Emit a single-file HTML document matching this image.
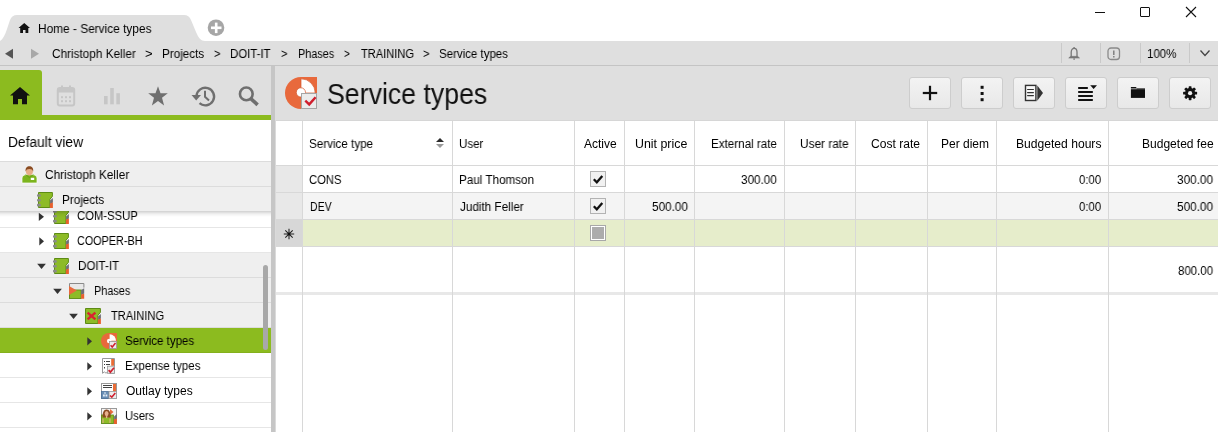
<!DOCTYPE html>
<html><head><meta charset="utf-8"><style>
html,body{margin:0;padding:0;width:1218px;height:432px;overflow:hidden;background:#fff;font-family:"Liberation Sans", sans-serif}
.t{position:absolute;white-space:nowrap;font-family:"Liberation Sans", sans-serif;will-change:transform}
.r{position:absolute}
.s{position:absolute;overflow:visible}
</style></head><body>
<svg class="s" style="left:0px;top:0px" width="260" height="42" viewBox="0 0 260 42"><path d="M0,41 C3,39 5,35 7,29 L10,20 C11.5,16.5 13.5,15 17,15 L184,15 C187.5,15 189.5,16.5 191,20 L196,32 C198.5,38 201,41 205,41 Z" fill="#dfdfdf"/><circle cx="216" cy="27.7" r="8.3" fill="#a6a6a6"/><rect x="211" y="26.5" width="10.5" height="2.6" fill="#fff"/><rect x="214.9" y="22.6" width="2.6" height="10.5" fill="#fff"/></svg>
<svg class="s" style="left:18px;top:22px" width="13" height="12" viewBox="0 0 13 12"><path d="M0.5,6 L6.25,1 L12,6 L10.3,6 L10.3,11 L7.5,11 L7.5,8 L5,8 L5,11 L2.2,11 L2.2,6 Z" fill="#111"/></svg>
<div class="t" style="top:20.84px;font-size:12px;line-height:16px;color:#000;left:37.71px;transform:scaleX(0.9894);transform-origin:0 0;">Home - Service types</div>
<div class="r" style="left:1095px;top:12px;width:10px;height:1px;background:#111;"></div>
<div class="r" style="left:1140px;top:7px;width:10px;height:10px;background:transparent;border:1px solid #111;box-sizing:border-box;border-radius:1px"></div>
<svg class="s" style="left:1185px;top:6px" width="12" height="12" viewBox="0 0 12 12"><path d="M1,1 L11,11 M11,1 L1,11" stroke="#111" stroke-width="1.1"/></svg>
<div class="r" style="left:0px;top:41px;width:1218px;height:24px;background:#dfdfdf;"></div>
<div class="r" style="left:0px;top:65px;width:1218px;height:1px;background:#c4c4c4;"></div>
<svg class="s" style="left:4px;top:48px" width="10" height="12" viewBox="0 0 10 12"><path d="M9,0.8 L9,10.8 L1,5.8 Z" fill="#555"/></svg>
<svg class="s" style="left:30px;top:48px" width="10" height="12" viewBox="0 0 10 12"><path d="M1,0.8 L1,10.8 L9,5.8 Z" fill="#a8a8a8"/></svg>
<div class="t" style="top:45.54px;font-size:12px;line-height:16px;color:#000;left:52.22px;transform:scaleX(0.9812);transform-origin:0 0;">Christoph Keller</div>
<div class="t" style="top:45.54px;font-size:12px;line-height:16px;color:#000;left:145.42px;transform:scaleX(1.0833);transform-origin:0 0;">&gt;</div>
<div class="t" style="top:45.54px;font-size:12px;line-height:16px;color:#000;left:162.33px;transform:scaleX(0.9738);transform-origin:0 0;">Projects</div>
<div class="t" style="top:45.54px;font-size:12px;line-height:16px;color:#000;left:214.38px;transform:scaleX(0.9167);transform-origin:0 0;">&gt;</div>
<div class="t" style="top:45.54px;font-size:12px;line-height:16px;color:#000;left:230.45px;transform:scaleX(0.9524);transform-origin:0 0;">DOIT-IT</div>
<div class="t" style="top:45.54px;font-size:12px;line-height:16px;color:#000;left:281.08px;transform:scaleX(0.9167);transform-origin:0 0;">&gt;</div>
<div class="t" style="top:45.54px;font-size:12px;line-height:16px;color:#000;left:297.69px;transform:scaleX(0.9051);transform-origin:0 0;">Phases</div>
<div class="t" style="top:45.54px;font-size:12px;line-height:16px;color:#000;left:343.57px;transform:scaleX(0.8333);transform-origin:0 0;">&gt;</div>
<div class="t" style="top:45.54px;font-size:12px;line-height:16px;color:#000;left:360.60px;transform:scaleX(0.9246);transform-origin:0 0;">TRAINING</div>
<div class="t" style="top:45.54px;font-size:12px;line-height:16px;color:#000;left:423.47px;transform:scaleX(0.9333);transform-origin:0 0;">&gt;</div>
<div class="t" style="top:45.54px;font-size:12px;line-height:16px;color:#000;left:439.34px;transform:scaleX(0.9577);transform-origin:0 0;">Service types</div>
<div class="r" style="left:1061px;top:43px;width:1px;height:20px;background:#c9c9c9;"></div>
<div class="r" style="left:1100px;top:43px;width:1px;height:20px;background:#c9c9c9;"></div>
<div class="r" style="left:1140px;top:43px;width:1px;height:20px;background:#c9c9c9;"></div>
<div class="r" style="left:1189px;top:43px;width:1px;height:20px;background:#c9c9c9;"></div>
<svg class="s" style="left:1067px;top:46px" width="14" height="15" viewBox="0 0 14 15"><path d="M4.2,11.2 L4.2,6.2 C4.2,3.7 5.5,2.4 7.1,2.4 C8.7,2.4 10,3.7 10,6.2 L10,11.2" fill="none" stroke="#777" stroke-width="1.3"/><path d="M1.8,11.9 L3.6,10.4 L10.6,10.4 L12.4,11.9 Z" fill="#777" stroke="#777" stroke-width="0.8"/><circle cx="7.1" cy="1.9" r="0.9" fill="#777"/><rect x="6.4" y="12.3" width="1.4" height="1.5" fill="#777"/></svg>
<svg class="s" style="left:1107px;top:47px" width="14" height="14" viewBox="0 0 14 14"><rect x="1" y="1" width="11.5" height="11.5" rx="3" fill="none" stroke="#8a8a8a" stroke-width="1.3"/><rect x="6.1" y="3.5" width="1.4" height="4.5" fill="#7a7a7a"/><rect x="6.1" y="9" width="1.4" height="1.5" fill="#7a7a7a"/></svg>
<div class="t" style="top:45.54px;font-size:12px;line-height:16px;color:#000;left:1146.94px;transform:scaleX(0.9586);transform-origin:0 0;">100%</div>
<svg class="s" style="left:1199px;top:49px" width="12" height="9" viewBox="0 0 12 9"><path d="M1.5,1.5 L6,6.5 L10.5,1.5" fill="none" stroke="#444" stroke-width="1.3"/></svg>
<div class="r" style="left:0px;top:66px;width:1218px;height:55px;background:#dfdfdf;"></div>
<div class="r" style="left:0px;top:70px;width:42px;height:50px;background:#8cbb1f;border-top-right-radius:3px"></div>
<div class="r" style="left:0px;top:115px;width:271px;height:5px;background:#8cbb1f;"></div>
<svg class="s" style="left:9px;top:86px" width="22" height="20" viewBox="0 0 22 20"><path d="M1,9.5 L11,1 L21,9.5 L18,9.5 L18,18.3 L13,18.3 L13,13 L9,13 L9,18.3 L4,18.3 L4,9.5 Z" fill="#111"/></svg>
<svg class="s" style="left:56px;top:85px" width="20" height="22" viewBox="0 0 20 22"><rect x="1.8" y="3" width="16.4" height="17.5" rx="2" fill="none" stroke="#c6c6c6" stroke-width="2"/><rect x="1.8" y="3" width="16.4" height="4.5" fill="#c6c6c6"/><rect x="5" y="0.5" width="2" height="4" fill="#c6c6c6"/><rect x="13" y="0.5" width="2" height="4" fill="#c6c6c6"/><rect x="5" y="11.2" width="2" height="2" fill="#c6c6c6"/><rect x="5" y="15.2" width="2" height="2" fill="#c6c6c6"/><rect x="9" y="11.2" width="2" height="2" fill="#c6c6c6"/><rect x="9" y="15.2" width="2" height="2" fill="#c6c6c6"/><rect x="13" y="11.2" width="2" height="2" fill="#c6c6c6"/><rect x="13" y="15.2" width="2" height="2" fill="#c6c6c6"/></svg>
<svg class="s" style="left:103px;top:87px" width="18" height="18" viewBox="0 0 18 18"><rect x="1" y="9" width="3.6" height="8.3" fill="#c6c6c6"/><rect x="7.2" y="1" width="3.6" height="16.3" fill="#c6c6c6"/><rect x="13.3" y="6.2" width="3.6" height="11.1" fill="#c6c6c6"/></svg>
<svg class="s" style="left:147px;top:85px" width="22" height="22" viewBox="0 0 22 22"><path d="M11,1.2 L13.5,8.2 L20.8,8.3 L15,12.8 L17.1,20.4 L11,16 L4.9,20.4 L7,12.8 L1.2,8.3 L8.5,8.2 Z" fill="#6f6f6f"/></svg>
<svg class="s" style="left:190px;top:85px" width="27" height="23" viewBox="0 0 27 23"><path d="M6.5,11 A8.8,8.8 0 1 1 9.5,18.2" fill="none" stroke="#6f6f6f" stroke-width="2.4"/><path d="M1.5,10 L11,10 L6.2,15.5 Z" fill="#6f6f6f"/><path d="M15,5.8 L15,11.8 L19,15.5" fill="none" stroke="#6f6f6f" stroke-width="2"/></svg>
<svg class="s" style="left:237px;top:85px" width="24" height="23" viewBox="0 0 24 23"><circle cx="9.3" cy="8.9" r="6.35" fill="none" stroke="#6f6f6f" stroke-width="2.6"/><path d="M13.8,13.6 L20.6,19.8" stroke="#6f6f6f" stroke-width="3.6"/></svg>
<svg class="s" style="left:285px;top:77px" width="32" height="32" viewBox="0 0 32 32"><path d="M16,0 L32,0 L32,32 L16,32 A16,16 0 0 1 16,0 Z" fill="#e8693c"/><path d="M16,1.8 A14.2,14.2 0 0 1 30.2,16 L16,16 Z" fill="#fff" stroke="#d2582c" stroke-width="0.7"/><circle cx="15.9" cy="15.4" r="4.6" fill="#fff" stroke="#d2582c" stroke-width="0.7"/><rect x="16.5" y="16.5" width="15" height="15" fill="#ebebeb" stroke="#a5a5a5" stroke-width="1"/><path d="M20.3,23.6 L24.2,27.4 L30.6,20.2" fill="none" stroke="#d01f2e" stroke-width="2.4"/></svg>
<div class="t" style="top:77.65px;font-size:29px;line-height:33px;color:#111;left:327.38px;transform:scaleX(0.9209);transform-origin:0 0;">Service types</div>
<div class="r" style="left:909px;top:77px;width:42px;height:32px;box-sizing:border-box;border:1px solid #cdcdcd;border-radius:3px;background:linear-gradient(#f3f3f3,#e8e8e8)"></div>
<div class="r" style="left:961px;top:77px;width:42px;height:32px;box-sizing:border-box;border:1px solid #cdcdcd;border-radius:3px;background:linear-gradient(#f3f3f3,#e8e8e8)"></div>
<div class="r" style="left:1013px;top:77px;width:42px;height:32px;box-sizing:border-box;border:1px solid #cdcdcd;border-radius:3px;background:linear-gradient(#f3f3f3,#e8e8e8)"></div>
<div class="r" style="left:1065px;top:77px;width:42px;height:32px;box-sizing:border-box;border:1px solid #cdcdcd;border-radius:3px;background:linear-gradient(#f3f3f3,#e8e8e8)"></div>
<div class="r" style="left:1117px;top:77px;width:42px;height:32px;box-sizing:border-box;border:1px solid #cdcdcd;border-radius:3px;background:linear-gradient(#f3f3f3,#e8e8e8)"></div>
<div class="r" style="left:1169px;top:77px;width:42px;height:32px;box-sizing:border-box;border:1px solid #cdcdcd;border-radius:3px;background:linear-gradient(#f3f3f3,#e8e8e8)"></div>
<svg class="s" style="left:922px;top:85px" width="16" height="16" viewBox="0 0 16 16"><rect x="0.8" y="6.9" width="14.4" height="2.2" fill="#111"/><rect x="6.9" y="0.8" width="2.2" height="14.4" fill="#111"/></svg>
<svg class="s" style="left:979px;top:85px" width="6" height="18" viewBox="0 0 6 18"><rect x="1.6" y="0.8" width="3" height="3" fill="#111"/><rect x="1.6" y="7.0" width="3" height="3" fill="#111"/><rect x="1.6" y="13.200000000000001" width="3" height="3" fill="#111"/></svg>
<svg class="s" style="left:1024px;top:84px" width="21" height="18" viewBox="0 0 21 18"><rect x="1.5" y="1.4" width="10.4" height="15.1" fill="#fff" fill-opacity="0.6" stroke="#333" stroke-width="1.4"/><rect x="3" y="4.9" width="7" height="1.2" rx="0.6" fill="#333"/><rect x="3" y="8" width="7" height="1.2" rx="0.6" fill="#333"/><rect x="3" y="11" width="7" height="1.2" rx="0.6" fill="#333"/><path d="M13.3,1.4 L19,9.1 L13.3,16.8 Z" fill="#333"/></svg>
<svg class="s" style="left:1077px;top:84px" width="22" height="19" viewBox="0 0 22 19"><rect x="1" y="3" width="10" height="2" rx="0.8" fill="#111"/><rect x="1" y="7" width="15" height="2" rx="0.8" fill="#111"/><rect x="1" y="11" width="15" height="2" rx="0.8" fill="#111"/><rect x="1" y="15" width="15" height="2" rx="0.8" fill="#111"/><path d="M13.2,1.2 L20,1.2 L16.6,5 Z" fill="#111"/></svg>
<svg class="s" style="left:1130px;top:85px" width="16" height="14" viewBox="0 0 16 14"><path d="M0.9,1.9 L5.8,1.9 L6.6,2.8 L6.6,3.6 L0.9,3.6 Z" fill="#111"/><rect x="0.9" y="4.2" width="14.1" height="8.7" fill="#111"/><rect x="6.6" y="3.4" width="8.4" height="1" fill="#111"/></svg>
<svg class="s" style="left:1182px;top:85px" width="16" height="16" viewBox="0 0 16 16"><g transform="translate(8.1,8.2)"><rect x="-1.4" y="-7" width="2.8" height="3.5" rx="0.6" fill="#111" transform="rotate(0)"/><rect x="-1.4" y="-7" width="2.8" height="3.5" rx="0.6" fill="#111" transform="rotate(45)"/><rect x="-1.4" y="-7" width="2.8" height="3.5" rx="0.6" fill="#111" transform="rotate(90)"/><rect x="-1.4" y="-7" width="2.8" height="3.5" rx="0.6" fill="#111" transform="rotate(135)"/><rect x="-1.4" y="-7" width="2.8" height="3.5" rx="0.6" fill="#111" transform="rotate(180)"/><rect x="-1.4" y="-7" width="2.8" height="3.5" rx="0.6" fill="#111" transform="rotate(225)"/><rect x="-1.4" y="-7" width="2.8" height="3.5" rx="0.6" fill="#111" transform="rotate(270)"/><rect x="-1.4" y="-7" width="2.8" height="3.5" rx="0.6" fill="#111" transform="rotate(315)"/><circle r="5.1" fill="#111"/><circle r="2.1" fill="#eee"/></g></svg>
<div class="r" style="left:276px;top:121px;width:942px;height:311px;background:#fff;"></div>
<div class="r" style="left:276px;top:120px;width:942px;height:1px;background:#d6d6d6;"></div>
<div class="r" style="left:275px;top:120px;width:1px;height:312px;background:#dadada;"></div>
<div class="r" style="left:276px;top:166px;width:942px;height:26px;background:#fff;"></div>
<div class="r" style="left:276px;top:193px;width:942px;height:26px;background:#f4f4f4;"></div>
<div class="r" style="left:276px;top:220px;width:942px;height:26px;background:#e6edcb;"></div>
<div class="r" style="left:276px;top:166px;width:26px;height:26px;background:#e8e8e8;"></div>
<div class="r" style="left:276px;top:193px;width:26px;height:26px;background:#e8e8e8;"></div>
<div class="r" style="left:276px;top:220px;width:26px;height:26px;background:#d7d7d7;"></div>
<div class="r" style="left:276px;top:165px;width:942px;height:1px;background:#d8d8d8;"></div>
<div class="r" style="left:276px;top:192px;width:942px;height:1px;background:#d8d8d8;"></div>
<div class="r" style="left:276px;top:219px;width:942px;height:1px;background:#d8d8d8;"></div>
<div class="r" style="left:276px;top:246px;width:942px;height:1px;background:#d8d8d8;"></div>
<div class="r" style="left:276px;top:292px;width:942px;height:3px;background:#e8e8e8;"></div>
<div class="r" style="left:302px;top:121px;width:1px;height:311px;background:#d8d8d8;"></div>
<div class="r" style="left:452px;top:121px;width:1px;height:311px;background:#d8d8d8;"></div>
<div class="r" style="left:574px;top:121px;width:1px;height:311px;background:#d8d8d8;"></div>
<div class="r" style="left:624px;top:121px;width:1px;height:311px;background:#d8d8d8;"></div>
<div class="r" style="left:694px;top:121px;width:1px;height:311px;background:#d8d8d8;"></div>
<div class="r" style="left:784px;top:121px;width:1px;height:311px;background:#d8d8d8;"></div>
<div class="r" style="left:855px;top:121px;width:1px;height:311px;background:#d8d8d8;"></div>
<div class="r" style="left:927px;top:121px;width:1px;height:311px;background:#d8d8d8;"></div>
<div class="r" style="left:996px;top:121px;width:1px;height:311px;background:#d8d8d8;"></div>
<div class="r" style="left:1108px;top:121px;width:1px;height:311px;background:#d8d8d8;"></div>
<div class="t" style="top:135.84px;font-size:12px;line-height:16px;color:#000;left:309.43px;transform:scaleX(0.9708);transform-origin:0 0;">Service type</div>
<svg class="s" style="left:435px;top:137px" width="10" height="12" viewBox="0 0 10 12"><path d="M1,5 L5,1 L9,5 Z" fill="#2a2a2a"/><path d="M1,7 L5,11 L9,7 Z" fill="#9a9a9a"/></svg>
<div class="t" style="top:135.84px;font-size:12px;line-height:16px;color:#000;left:459.44px;transform:scaleX(0.9625);transform-origin:0 0;">User</div>
<div class="t" style="top:135.84px;font-size:12px;line-height:16px;color:#000;left:583.60px;transform:scaleX(0.9875);transform-origin:0 0;">Active</div>
<div class="t" style="top:135.84px;font-size:12px;line-height:16px;color:#000;left:635.17px;transform:scaleX(1.0327);transform-origin:0 0;">Unit price</div>
<div class="t" style="top:135.84px;font-size:12px;line-height:16px;color:#000;left:710.73px;transform:scaleX(0.9701);transform-origin:0 0;">External rate</div>
<div class="t" style="top:135.84px;font-size:12px;line-height:16px;color:#000;left:799.51px;transform:scaleX(0.9854);transform-origin:0 0;">User rate</div>
<div class="t" style="top:135.84px;font-size:12px;line-height:16px;color:#000;left:871.49px;transform:scaleX(1.0064);transform-origin:0 0;">Cost rate</div>
<div class="t" style="top:135.84px;font-size:12px;line-height:16px;color:#000;left:941.40px;transform:scaleX(0.9978);transform-origin:0 0;">Per diem</div>
<div class="t" style="top:135.84px;font-size:12px;line-height:16px;color:#000;left:1016.09px;transform:scaleX(1.0084);transform-origin:0 0;">Budgeted hours</div>
<div class="t" style="top:135.84px;font-size:12px;line-height:16px;color:#000;left:1141.60px;transform:scaleX(1.0029);transform-origin:0 0;">Budgeted fee</div>
<div class="t" style="top:171.54px;font-size:12px;line-height:16px;color:#000;left:309.47px;transform:scaleX(0.9333);transform-origin:0 0;">CONS</div>
<div class="t" style="top:171.54px;font-size:12px;line-height:16px;color:#000;left:459.43px;transform:scaleX(0.9724);transform-origin:0 0;">Paul Thomson</div>
<div class="t" style="top:171.54px;font-size:12px;line-height:16px;color:#000;left:741.42px;transform:scaleX(0.9771);transform-origin:0 0;">300.00</div>
<div class="t" style="top:171.54px;font-size:12px;line-height:16px;color:#000;left:1079.10px;transform:scaleX(0.9435);transform-origin:0 0;">0:00</div>
<div class="t" style="top:171.54px;font-size:12px;line-height:16px;color:#000;left:1177.32px;transform:scaleX(0.9829);transform-origin:0 0;">300.00</div>
<div class="t" style="top:198.74px;font-size:12px;line-height:16px;color:#000;left:309.52px;transform:scaleX(0.8750);transform-origin:0 0;">DEV</div>
<div class="t" style="top:198.74px;font-size:12px;line-height:16px;color:#000;left:460.20px;transform:scaleX(0.9754);transform-origin:0 0;">Judith Feller</div>
<div class="t" style="top:198.74px;font-size:12px;line-height:16px;color:#000;left:651.52px;transform:scaleX(0.9800);transform-origin:0 0;">500.00</div>
<div class="t" style="top:198.74px;font-size:12px;line-height:16px;color:#000;left:1079.10px;transform:scaleX(0.9435);transform-origin:0 0;">0:00</div>
<div class="t" style="top:198.74px;font-size:12px;line-height:16px;color:#000;left:1177.32px;transform:scaleX(0.9829);transform-origin:0 0;">500.00</div>
<div class="t" style="top:262.64px;font-size:12px;line-height:16px;color:#000;left:1178.30px;transform:scaleX(0.9556);transform-origin:0 0;">800.00</div>
<svg class="s" style="left:590px;top:171px" width="16" height="16" viewBox="0 0 16 16"><rect x="0.5" y="0.5" width="15" height="15" fill="#f1f1f1" stroke="#b3b3b3"/><path d="M3.8,8.3 L6.8,11.3 L12.3,5" fill="none" stroke="#111" stroke-width="2.3"/></svg>
<svg class="s" style="left:590px;top:198px" width="16" height="16" viewBox="0 0 16 16"><rect x="0.5" y="0.5" width="15" height="15" fill="#f1f1f1" stroke="#b3b3b3"/><path d="M3.8,8.3 L6.8,11.3 L12.3,5" fill="none" stroke="#111" stroke-width="2.3"/></svg>
<svg class="s" style="left:590px;top:225px" width="16" height="16" viewBox="0 0 16 16"><rect x="0.5" y="0.5" width="15" height="15" fill="#fff" stroke="#a8a8a8"/><rect x="2" y="2" width="12" height="12" fill="#acacac"/></svg>
<svg class="s" style="left:283px;top:228px" width="12" height="12" viewBox="0 0 12 12"><path d="M6,0.8 L6,11.2 M0.8,6 L11.2,6 M2.3,2.3 L9.7,9.7 M9.7,2.3 L2.3,9.7" stroke="#222" stroke-width="1.05"/><circle cx="6" cy="6" r="1.2" fill="#111"/></svg>
<div class="r" style="left:0px;top:120px;width:271px;height:312px;background:#fff;"></div>
<div class="t" style="top:133.05px;font-size:14px;line-height:18px;color:#000;left:7.82px;transform:scaleX(0.9840);transform-origin:0 0;">Default view</div>
<div class="r" style="left:0px;top:161px;width:271px;height:1px;background:#dcdcdc;"></div>
<div class="r" style="left:0px;top:162px;width:271px;height:24px;background:#efefef;"></div>
<div class="r" style="left:0px;top:186px;width:271px;height:1px;background:#dcdcdc;"></div>
<div class="r" style="left:0px;top:211px;width:271px;height:16px;background:#fff;"></div>
<div class="r" style="left:0px;top:227px;width:271px;height:1px;background:#e6e6e6;"></div>
<svg class="s" style="left:38px;top:212px" width="8" height="10" viewBox="0 0 8 10"><path d="M0.8,0.8 L0.8,8.9 L6,4.85 Z" fill="#333"/></svg>
<svg class="s" style="left:53px;top:208px" width="16" height="16" viewBox="0 0 16 16"><path d="M1.5,0.5 L15.4,0.5 L15.4,4.4 L12.9,7.3 L12.9,15.5 L1.5,15.5 Z" fill="#8dbb27" stroke="#5d8c14"/><path d="M13.1,8.6 L15.9,6.1 L15.9,10.4 L13.1,12.2 Z" fill="#6e6e76"/><path d="M12.9,11.6 L15.9,10.6 L15.9,15.9 L12.9,15.9 Z" fill="#e8602e"/><rect x="0" y="2.2" width="3.8" height="2.6" rx="1" fill="#8a8a8a"/><rect x="0" y="6.9" width="3.8" height="2.6" rx="1" fill="#8a8a8a"/><rect x="0" y="11.8" width="3.8" height="2.6" rx="1" fill="#8a8a8a"/></svg>
<div class="t" style="top:207.54px;font-size:12px;line-height:16px;color:#000;left:77.36px;transform:scaleX(0.9397);transform-origin:0 0;">COM-SSUP</div>
<div class="r" style="left:0px;top:228px;width:271px;height:24px;background:#fff;"></div>
<div class="r" style="left:0px;top:252px;width:271px;height:1px;background:#e6e6e6;"></div>
<svg class="s" style="left:39px;top:237px" width="8" height="10" viewBox="0 0 8 10"><path d="M0.3,0.3 L0.3,8.4 L5,4.35 Z" fill="#333"/></svg>
<svg class="s" style="left:53px;top:233px" width="16" height="16" viewBox="0 0 16 16"><path d="M1.5,0.5 L15.4,0.5 L15.4,4.4 L12.9,7.3 L12.9,15.5 L1.5,15.5 Z" fill="#8dbb27" stroke="#5d8c14"/><path d="M13.1,8.6 L15.9,6.1 L15.9,10.4 L13.1,12.2 Z" fill="#6e6e76"/><path d="M12.9,11.6 L15.9,10.6 L15.9,15.9 L12.9,15.9 Z" fill="#e8602e"/><rect x="0" y="2.2" width="3.8" height="2.6" rx="1" fill="#8a8a8a"/><rect x="0" y="6.9" width="3.8" height="2.6" rx="1" fill="#8a8a8a"/><rect x="0" y="11.8" width="3.8" height="2.6" rx="1" fill="#8a8a8a"/></svg>
<div class="t" style="top:232.64px;font-size:12px;line-height:16px;color:#000;left:77.40px;transform:scaleX(0.9014);transform-origin:0 0;">COOPER-BH</div>
<div class="r" style="left:0px;top:253px;width:271px;height:24px;background:#efefef;"></div>
<div class="r" style="left:0px;top:277px;width:271px;height:1px;background:#dcdcdc;"></div>
<svg class="s" style="left:37px;top:263px" width="10" height="7" viewBox="0 0 10 7"><path d="M0.2,0.8 L8.9,0.8 L4.55,5.9 Z" fill="#333"/></svg>
<svg class="s" style="left:53px;top:258px" width="16" height="16" viewBox="0 0 16 16"><path d="M1.5,0.5 L15.4,0.5 L15.4,4.4 L12.9,7.3 L12.9,15.5 L1.5,15.5 Z" fill="#8dbb27" stroke="#5d8c14"/><path d="M13.1,8.6 L15.9,6.1 L15.9,10.4 L13.1,12.2 Z" fill="#6e6e76"/><path d="M12.9,11.6 L15.9,10.6 L15.9,15.9 L12.9,15.9 Z" fill="#e8602e"/><rect x="0" y="2.2" width="3.8" height="2.6" rx="1" fill="#8a8a8a"/><rect x="0" y="6.9" width="3.8" height="2.6" rx="1" fill="#8a8a8a"/><rect x="0" y="11.8" width="3.8" height="2.6" rx="1" fill="#8a8a8a"/></svg>
<div class="t" style="top:257.64px;font-size:12px;line-height:16px;color:#000;left:77.54px;transform:scaleX(0.9643);transform-origin:0 0;">DOIT-IT</div>
<div class="r" style="left:0px;top:278px;width:271px;height:24px;background:#efefef;"></div>
<div class="r" style="left:0px;top:302px;width:271px;height:1px;background:#dcdcdc;"></div>
<svg class="s" style="left:53px;top:288px" width="10" height="7" viewBox="0 0 10 7"><path d="M0.2,0.8 L8.9,0.8 L4.55,5.9 Z" fill="#333"/></svg>
<svg class="s" style="left:69px;top:283px" width="16" height="16" viewBox="0 0 16 16"><path d="M14.9,4.6 L14.9,0.5 L0.5,0.5 L0.5,15.5" fill="#e8e8e8" stroke="#8a8a8a"/><rect x="0.5" y="7" width="11.6" height="8.5" fill="#8dbb27" stroke="#5d8c14" stroke-width="0.9"/><path d="M0,2.9 L7.9,7.4 L0,11.9 Z" fill="#e8693c"/><path d="M12.1,7 L15.2,5.2 L15.2,10.4 L12.1,12.1 Z" fill="#6e6e76"/><path d="M12.1,11.6 L15.2,10.7 L15.2,15.8 L12.1,15.8 Z" fill="#e8602e"/></svg>
<div class="t" style="top:282.64px;font-size:12px;line-height:16px;color:#000;left:93.79px;transform:scaleX(0.9077);transform-origin:0 0;">Phases</div>
<div class="r" style="left:0px;top:303px;width:271px;height:24px;background:#efefef;"></div>
<div class="r" style="left:0px;top:327px;width:271px;height:1px;background:#dcdcdc;"></div>
<svg class="s" style="left:69px;top:313px" width="10" height="7" viewBox="0 0 10 7"><path d="M0.2,0.8 L8.9,0.8 L4.55,5.9 Z" fill="#333"/></svg>
<svg class="s" style="left:85px;top:308px" width="16" height="16" viewBox="0 0 16 16"><path d="M0.5,0.5 L15.4,0.5 L15.4,4.4 L12.9,7.3 L12.9,15.5 L0.5,15.5 Z" fill="#8dbb27" stroke="#5d8c14"/><path d="M13.1,8.6 L15.9,6.1 L15.9,10.4 L13.1,12.2 Z" fill="#6e6e76"/><path d="M12.9,11.6 L15.9,10.6 L15.9,15.9 L12.9,15.9 Z" fill="#e8602e"/><path d="M2.6,4.6 L10.4,11.4 M10.4,4.6 L2.6,11.4" stroke="#d8232f" stroke-width="2.4"/></svg>
<div class="t" style="top:307.64px;font-size:12px;line-height:16px;color:#000;left:110.60px;transform:scaleX(0.9263);transform-origin:0 0;">TRAINING</div>
<div class="r" style="left:0px;top:328px;width:271px;height:24px;background:#8cbb1f;"></div>
<div class="r" style="left:0px;top:352px;width:271px;height:1px;background:#84b01c;"></div>
<svg class="s" style="left:87px;top:337px" width="8" height="10" viewBox="0 0 8 10"><path d="M0.3,0.3 L0.3,8.4 L5,4.35 Z" fill="#333"/></svg>
<svg class="s" style="left:101px;top:333px" width="16" height="16" viewBox="0 0 16 16"><path d="M8,0 L16,0 L16,16 L8,16 A8,8 0 0 1 8,0 Z" fill="#e8693c"/><path d="M8.6,1.3 A6.5,6.5 0 0 1 15.1,7.8 L8.6,7.8 Z" fill="#fff"/><circle cx="8.2" cy="8" r="2.3" fill="#fff"/><rect x="8.5" y="8.5" width="7" height="7" fill="#ececec" stroke="#9a9a9a" stroke-width="0.8"/><path d="M9.6,12.3 L11.2,14 L14.5,10" fill="none" stroke="#d01f2e" stroke-width="1.5"/></svg>
<div class="t" style="top:332.64px;font-size:12px;line-height:16px;color:#000;left:125.44px;transform:scaleX(0.9606);transform-origin:0 0;">Service types</div>
<div class="r" style="left:0px;top:353px;width:271px;height:24px;background:#fff;"></div>
<div class="r" style="left:0px;top:377px;width:271px;height:1px;background:#e6e6e6;"></div>
<svg class="s" style="left:87px;top:362px" width="8" height="10" viewBox="0 0 8 10"><path d="M0.3,0.3 L0.3,8.4 L5,4.35 Z" fill="#333"/></svg>
<svg class="s" style="left:101px;top:358px" width="16" height="16" viewBox="0 0 16 16"><path d="M1.5,0.5 L13.5,0.5 L13.5,15.3 L8,15.3 L6.5,13.8 L5,15.3 L3.5,13.8 L1.5,15.3 Z" fill="#fff" stroke="#999"/><rect x="10.2" y="1" width="2.8" height="6.8" fill="#ea6c35"/><rect x="3" y="3" width="1" height="1" fill="#333"/><rect x="5" y="3" width="4" height="1" fill="#444"/><rect x="3" y="6" width="1" height="1" fill="#333"/><rect x="5" y="6" width="4" height="1" fill="#444"/><rect x="3" y="9" width="1" height="1.5" fill="#444"/><rect x="6.5" y="8.2" width="7" height="7.1" fill="#ececec" stroke="#999" stroke-width="0.8"/><path d="M7.6,12.2 L9.4,14.1 L13,9.8" fill="none" stroke="#d01f2e" stroke-width="1.7"/></svg>
<div class="t" style="top:357.64px;font-size:12px;line-height:16px;color:#000;left:125.44px;transform:scaleX(0.9584);transform-origin:0 0;">Expense types</div>
<div class="r" style="left:0px;top:378px;width:271px;height:24px;background:#fff;"></div>
<div class="r" style="left:0px;top:402px;width:271px;height:1px;background:#e6e6e6;"></div>
<svg class="s" style="left:87px;top:387px" width="8" height="10" viewBox="0 0 8 10"><path d="M0.3,0.3 L0.3,8.4 L5,4.35 Z" fill="#333"/></svg>
<svg class="s" style="left:101px;top:383px" width="16" height="16" viewBox="0 0 16 16"><rect x="0.5" y="0.5" width="15" height="15" fill="#fff" stroke="#999"/><rect x="12" y="1" width="3" height="7.5" fill="#ea6c35"/><rect x="2" y="2" width="9" height="1" fill="#444"/><rect x="2" y="4" width="9" height="1" fill="#444"/><rect x="0.5" y="8.5" width="7" height="7" fill="#6a8fb5" stroke="#4d7198" stroke-width="0.8"/><rect x="2" y="11.5" width="1.8" height="2" fill="#e6eef6"/><rect x="4.5" y="11.5" width="1.8" height="2" fill="#e6eef6"/><rect x="3" y="9.5" width="2" height="1" fill="#e6eef6"/><rect x="8" y="8.5" width="7.5" height="7" fill="#ececec" stroke="#999" stroke-width="0.8"/><path d="M9,12.5 L10.8,14.2 L14.3,10" fill="none" stroke="#d01f2e" stroke-width="1.6"/></svg>
<div class="t" style="top:382.64px;font-size:12px;line-height:16px;color:#000;left:126.30px;transform:scaleX(0.9955);transform-origin:0 0;">Outlay types</div>
<div class="r" style="left:0px;top:403px;width:271px;height:24px;background:#fff;"></div>
<div class="r" style="left:0px;top:427px;width:271px;height:1px;background:#e6e6e6;"></div>
<svg class="s" style="left:87px;top:412px" width="8" height="10" viewBox="0 0 8 10"><path d="M0.3,0.3 L0.3,8.4 L5,4.35 Z" fill="#333"/></svg>
<svg class="s" style="left:101px;top:408px" width="16" height="16" viewBox="0 0 16 16"><rect x="0.5" y="0.5" width="15" height="15" fill="#f4f4f4" stroke="#999"/><path d="M9,1 L12.5,4 L9,7 Z" fill="#e8693c"/><rect x="0.5" y="7" width="12" height="8.5" fill="#8dbb27" stroke="#5d8c14" stroke-width="0.8"/><path d="M1.6,9.6 C1.4,4.6 2.6,1.6 5.6,1.6 C8.6,1.6 9.8,4.6 9.6,9.6 Z" fill="#8b4a22"/><ellipse cx="5.6" cy="5.6" rx="1.9" ry="2.6" fill="#e7b08e"/><rect x="4.9" y="7.8" width="1.4" height="2.4" fill="#e7b08e"/><rect x="1.5" y="10.5" width="1" height="4.5" fill="#e7b08e"/><rect x="8.5" y="10.5" width="1" height="4.5" fill="#e7b08e"/><path d="M13.1,8.6 L15.9,6.1 L15.9,10.4 L13.1,12.2 Z" fill="#6e6e76"/><path d="M12.9,11.6 L15.9,10.6 L15.9,15.9 L12.9,15.9 Z" fill="#e8602e"/></svg>
<div class="t" style="top:407.64px;font-size:12px;line-height:16px;color:#000;left:125.36px;transform:scaleX(0.9367);transform-origin:0 0;">Users</div>
<svg class="s" style="left:21px;top:165px" width="17" height="19" viewBox="0 0 17 19"><path d="M1,18 L1,13.2 C1,11.2 2.6,10 5,9.6 L12,9.6 C14.4,10 16,11.2 16,13.2 L16,18 Z" fill="#7cb41e" stroke="#fff" stroke-width="0.7"/><path d="M4.6,9.6 L8.5,12.6 L12.4,9.6" fill="none" stroke="#5f9410" stroke-width="0.7"/><ellipse cx="8.4" cy="6.3" rx="3.5" ry="4.1" fill="#e6ad88"/><path d="M4.6,6.6 C4.2,2.6 6,1.2 8.4,1.2 C10.8,1.2 12.6,2.6 12.2,6.6 C11.6,4.6 10.6,3.9 8.4,3.9 C6.2,3.9 5.2,4.6 4.6,6.6 Z" fill="#8a4c22"/><rect x="9.8" y="12.8" width="3.4" height="2.2" fill="#fff"/></svg>
<div class="t" style="top:167.14px;font-size:12px;line-height:16px;color:#000;left:45.31px;transform:scaleX(0.9859);transform-origin:0 0;">Christoph Keller</div>
<div class="r" style="left:0;top:187px;width:271px;height:24px;background:#efefef"></div>
<div class="r" style="left:0;top:211px;width:271px;height:6px;background:linear-gradient(rgba(0,0,0,0.19),rgba(0,0,0,0.06) 50%,rgba(0,0,0,0))"></div>
<svg class="s" style="left:37px;top:192px" width="16" height="16" viewBox="0 0 16 16"><path d="M1.5,0.5 L15.4,0.5 L15.4,4.4 L12.9,7.3 L12.9,15.5 L1.5,15.5 Z" fill="#8dbb27" stroke="#5d8c14"/><path d="M13.1,8.6 L15.9,6.1 L15.9,10.4 L13.1,12.2 Z" fill="#6e6e76"/><path d="M12.9,11.6 L15.9,10.6 L15.9,15.9 L12.9,15.9 Z" fill="#e8602e"/><rect x="0" y="2.2" width="3.8" height="2.6" rx="1" fill="#8a8a8a"/><rect x="0" y="6.9" width="3.8" height="2.6" rx="1" fill="#8a8a8a"/><rect x="0" y="11.8" width="3.8" height="2.6" rx="1" fill="#8a8a8a"/></svg>
<div class="t" style="top:191.94px;font-size:12px;line-height:16px;color:#000;left:61.52px;transform:scaleX(0.9762);transform-origin:0 0;">Projects</div>
<div class="r" style="left:271px;top:66px;width:4px;height:366px;background:#c6c6c6;"></div>
<div class="r" style="left:263px;top:265px;width:5px;height:85px;background:#a8a8a8;border-radius:2.5px"></div>
</body></html>
